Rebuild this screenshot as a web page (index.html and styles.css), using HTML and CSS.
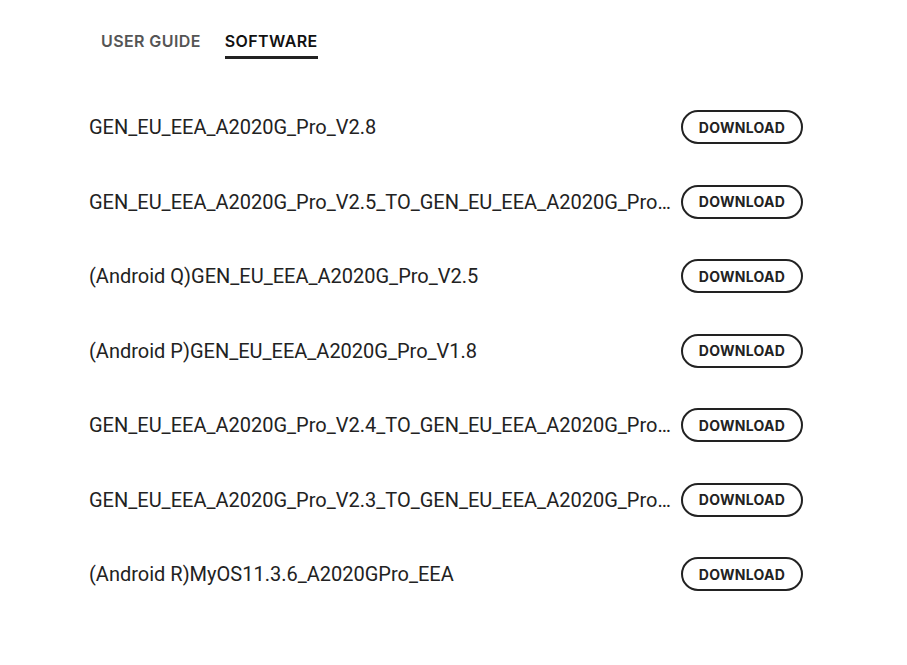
FILE: index.html
```html
<!DOCTYPE html>
<html>
<head>
<meta charset="utf-8">
<link rel="stylesheet" href="styles.css">
</head>
<body>
<div class="wrap">
  <div class="tabs">
    <div class="tab">USER GUIDE</div>
    <div class="tab active">SOFTWARE</div>
  </div>
  <ul class="list">
    <li class="row"><span class="name">GEN_EU_EEA_A2020G_Pro_V2.8</span><a class="btn">DOWNLOAD</a></li>
    <li class="row"><span class="name">GEN_EU_EEA_A2020G_Pro_V2.5_TO_GEN_EU_EEA_A2020G_Pro_V2.8</span><a class="btn">DOWNLOAD</a></li>
    <li class="row"><span class="name">(Android Q)GEN_EU_EEA_A2020G_Pro_V2.5</span><a class="btn">DOWNLOAD</a></li>
    <li class="row"><span class="name">(Android P)GEN_EU_EEA_A2020G_Pro_V1.8</span><a class="btn">DOWNLOAD</a></li>
    <li class="row"><span class="name">GEN_EU_EEA_A2020G_Pro_V2.4_TO_GEN_EU_EEA_A2020G_Pro_V2.5</span><a class="btn">DOWNLOAD</a></li>
    <li class="row"><span class="name">GEN_EU_EEA_A2020G_Pro_V2.3_TO_GEN_EU_EEA_A2020G_Pro_V2.4</span><a class="btn">DOWNLOAD</a></li>
    <li class="row"><span class="name">(Android R)MyOS11.3.6_A2020GPro_EEA</span><a class="btn">DOWNLOAD</a></li>
  </ul>
</div>
</body>
</html>
```
FILE: styles.css
```css
html, body { margin: 0; padding: 0; background: #fff; }
body { font-family: Roboto, "Liberation Sans", sans-serif; color: #222; }
.wrap { width: 714px; margin-left: 89px; padding-top: 31px; }
.tabs { display: flex; gap: 24px; padding-left: 12px; }
.tab {
  font-family: Inter, "Open Sans", sans-serif;
  font-weight: 600;
  font-size: 16px;
  letter-spacing: 0.4px;
  color: #555;
  padding-bottom: 5px;
  border-bottom: 3px solid transparent;
  line-height: 20px;
}
.tab.active { color: #111; border-bottom-color: #222; }
.list { list-style: none; margin: 0; padding: 0; margin-top: 51px; }
.row {
  display: flex;
  align-items: center;
  gap: 4px;
  height: 34px;
  margin-bottom: 40.5px;
}
.name {
  flex: 1;
  min-width: 0;
  font-size: 20px;
  white-space: nowrap;
  overflow: hidden;
  text-overflow: ellipsis;
}
.btn {
  flex: none;
  box-sizing: border-box;
  width: 122px;
  height: 34px;
  border: 2px solid #222;
  border-radius: 17px;
  display: flex;
  align-items: center;
  justify-content: center;
  font-family: Inter, "Open Sans", sans-serif;
  font-weight: 700;
  font-size: 14px;
  letter-spacing: 0.3px;
  color: #222;
}
```
